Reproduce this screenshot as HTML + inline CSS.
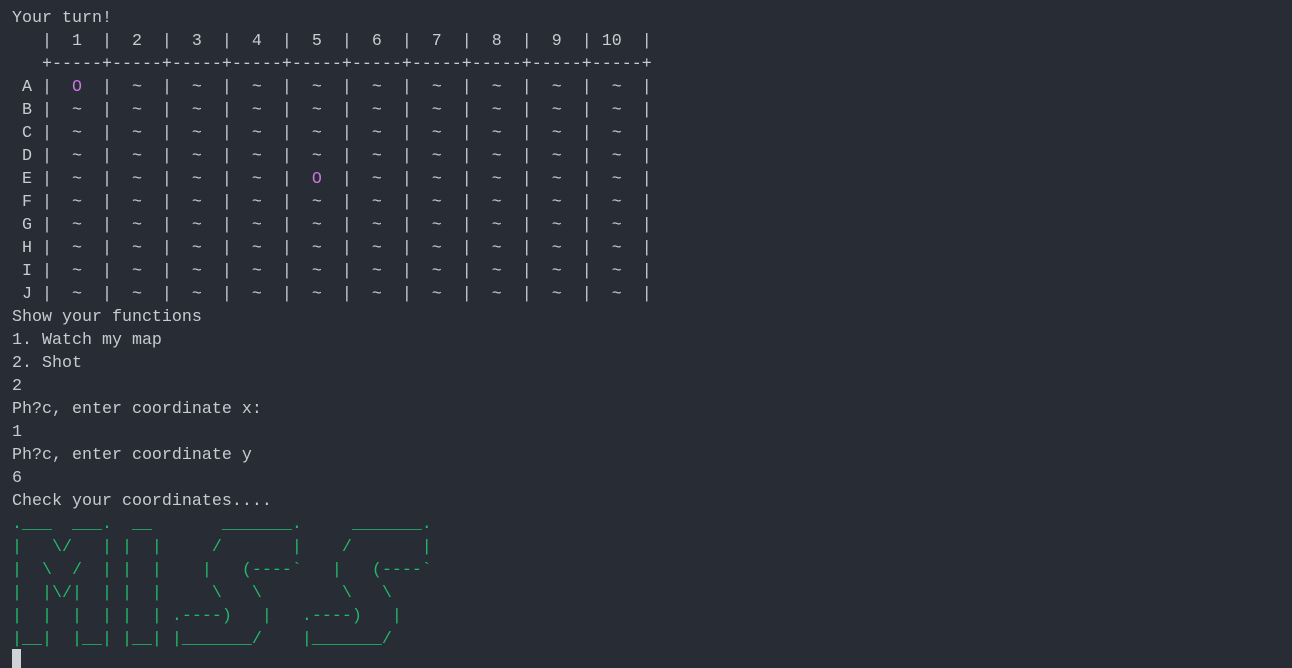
<!DOCTYPE html>
<html><head><meta charset="utf-8"><style>
html,body{margin:0;padding:0;background:#282c34;width:1292px;height:668px;overflow:hidden}
pre{margin:0;position:absolute;left:12px;top:7px;font-family:"Liberation Mono",monospace;font-size:16.67px;line-height:23px;color:#c8cbd0}
.m{color:#c678dd}.g{color:#23b96c}
.cur{position:absolute;left:12px;top:649px;width:9px;height:19px;background:#cfd2d6}
</style></head><body>
<pre>Your turn!
   |  1  |  2  |  3  |  4  |  5  |  6  |  7  |  8  |  9  | 10  |
   +-----+-----+-----+-----+-----+-----+-----+-----+-----+-----+
 A |  <span class="m">O</span>  |  ~  |  ~  |  ~  |  ~  |  ~  |  ~  |  ~  |  ~  |  ~  |
 B |  ~  |  ~  |  ~  |  ~  |  ~  |  ~  |  ~  |  ~  |  ~  |  ~  |
 C |  ~  |  ~  |  ~  |  ~  |  ~  |  ~  |  ~  |  ~  |  ~  |  ~  |
 D |  ~  |  ~  |  ~  |  ~  |  ~  |  ~  |  ~  |  ~  |  ~  |  ~  |
 E |  ~  |  ~  |  ~  |  ~  |  <span class="m">O</span>  |  ~  |  ~  |  ~  |  ~  |  ~  |
 F |  ~  |  ~  |  ~  |  ~  |  ~  |  ~  |  ~  |  ~  |  ~  |  ~  |
 G |  ~  |  ~  |  ~  |  ~  |  ~  |  ~  |  ~  |  ~  |  ~  |  ~  |
 H |  ~  |  ~  |  ~  |  ~  |  ~  |  ~  |  ~  |  ~  |  ~  |  ~  |
 I |  ~  |  ~  |  ~  |  ~  |  ~  |  ~  |  ~  |  ~  |  ~  |  ~  |
 J |  ~  |  ~  |  ~  |  ~  |  ~  |  ~  |  ~  |  ~  |  ~  |  ~  |
Show your functions
1. Watch my map
2. Shot
2
Ph?c, enter coordinate x:
1
Ph?c, enter coordinate y
6
Check your coordinates....
<span class="g">.___  ___.  __       _______.     _______.
|   \/   | |  |     /       |    /       |
|  \  /  | |  |    |   (----`   |   (----`
|  |\/|  | |  |     \   \        \   \
|  |  |  | |  | .----)   |   .----)   |
|__|  |__| |__| |_______/    |_______/</span></pre>
<div class="cur"></div>
</body></html>
